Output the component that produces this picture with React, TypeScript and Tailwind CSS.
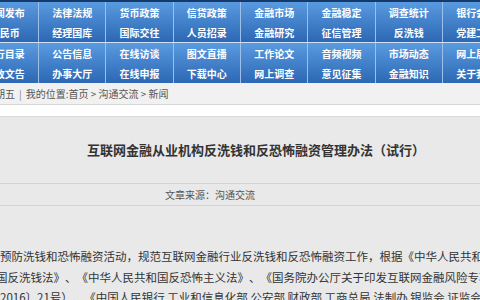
import React from "react";

const navTop = [
  ["新闻发布", "人民币"],
  ["法律法规", "经理国库"],
  ["货币政策", "国际交往"],
  ["信贷政策", "人员招录"],
  ["金融市场", "金融研究"],
  ["金融稳定", "征信管理"],
  ["调查统计", "反洗钱"],
  ["银行会计", "党建工作"],
];

const navBottom = [
  ["发行目录", "行政文告"],
  ["公告信息", "办事大厅"],
  ["在线访谈", "在线申报"],
  ["图文直播", "下载中心"],
  ["工作论文", "网上调查"],
  ["音频视频", "意见征集"],
  ["市场动态", "金融知识"],
  ["网上展厅", "关于我们"],
];

const NavBlock: React.FC<{ items: string[][] }> = ({ items }) => (
  <div className="flex -ml-[29.33px]">
    {items.map((col, i) => (
      <div
        key={i}
        className="w-[67.33px] shrink-0 border-l border-[#9cc0e9] bg-linear-to-b from-[#5a9be0] to-[#2c67b4]"
      >
        {col.map((label) => (
          <div
            key={label}
            className="h-[20px] flex items-center justify-center whitespace-nowrap text-[10px] font-bold text-white"
          >
            {label}
          </div>
        ))}
      </div>
    ))}
  </div>
);

export default function App() {
  return (
    <div className="w-[480px] h-[300px] overflow-hidden bg-[#e9e9e9] font-['Noto_Sans_CJK_SC',sans-serif] [text-spacing-trim:space-all]">
      <div className="h-[2px] bg-[#143a6b]" />
      <NavBlock items={navTop} />
      <div className="h-[1px] bg-[#cfe0f4]" />
      <NavBlock items={navBottom} />

      {/* breadcrumb */}
      <div className="h-[22px] bg-[#f1f1f1] border-b border-[#d6d6d6] flex items-center text-[10px] text-[#555] whitespace-nowrap">
        <span className="-ml-[15px]">星期五</span>
        <span className="mx-[4px] text-[#888]">|</span>
        <span>我的位置:首页 &gt; 沟通交流 &gt; 新闻</span>
      </div>
      <div className="h-[12px] bg-white border-b border-[#d9d9d9]" />

      {/* title */}
      <div className="h-[66px] flex items-center justify-center pl-[32px] pb-[1px]">
        <h1 className="text-[13px] font-bold text-[#333] whitespace-nowrap">
          互联网金融从业机构反洗钱和反恐怖融资管理办法（试行）
        </h1>
      </div>
      <div className="h-[23px] border-y border-[#d4d4d4] flex items-center pl-[165px] text-[10px] text-[#555]">
        文章来源：沟通交流
      </div>

      {/* body */}
      <div className="pt-[40px] text-[11.5px] leading-[20.5px] text-[#333] whitespace-nowrap">
        <p className="-ml-[11.5px]">
          为预防洗钱和恐怖融资活动，规范互联网金融行业反洗钱和反恐怖融资工作，根据《中华人民共和国中国人民银行法》、《中华人民共和
        </p>
        <p className="-ml-[4px]">
          国反洗钱法》、《中华人民共和国反恐怖主义法》、《国务院办公厅关于印发互联网金融风险专项整治工作实施方案的通知》
        </p>
        <p className="-ml-[11.5px]">
          〔2016〕21号）、《中国人民银行 工业和信息化部 公安部 财政部 工商总局 法制办 银监会 证监会 保监会
        </p>
      </div>
    </div>
  );
}
